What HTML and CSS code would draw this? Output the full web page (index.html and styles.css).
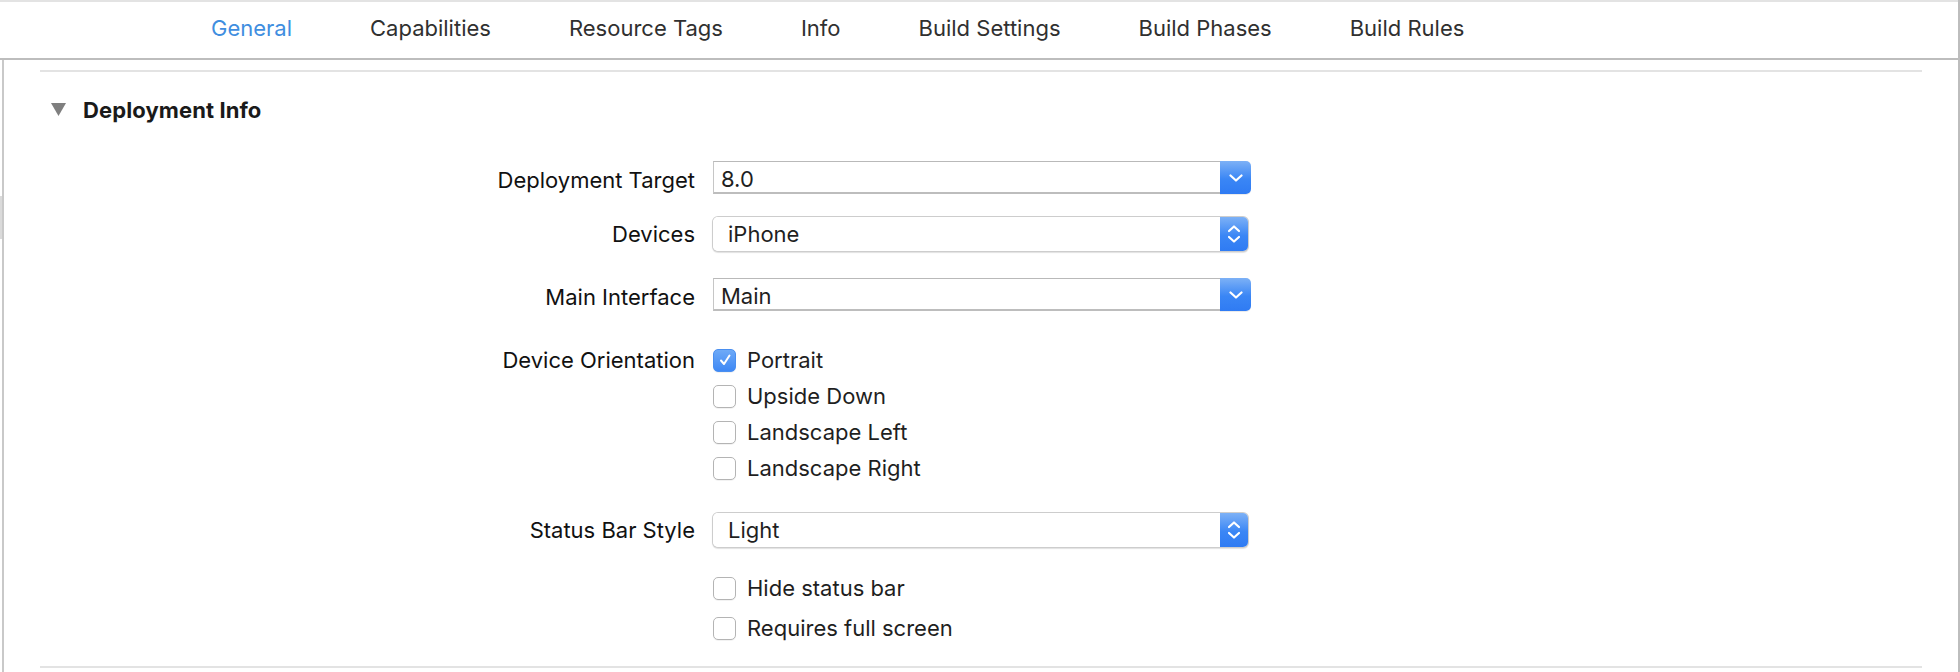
FILE: index.html
```html
<!DOCTYPE html>
<html lang="en">
<head>
<meta charset="utf-8">
<title>General</title>
<link rel="stylesheet" href="styles.css">
</head>
<body>
<div class="window">
  <nav class="tabs">
    <span class="tab active">General</span>
    <span class="tab">Capabilities</span>
    <span class="tab">Resource Tags</span>
    <span class="tab">Info</span>
    <span class="tab">Build Settings</span>
    <span class="tab">Build Phases</span>
    <span class="tab">Build Rules</span>
  </nav>
  <main class="content">
    <section class="section">
      <header class="section-head">
        <svg class="disclosure" width="15" height="13" viewBox="0 0 15 13"><polygon points="0,0 15,0 7.5,13" fill="#7f7f7f"/></svg>
        <h2 class="section-title">Deployment Info</h2>
      </header>
      <div class="form">
        <div class="row row-combo row-target">
          <div class="label">Deployment Target</div>
          <div class="combo">
            <span class="combo-field">8.0</span>
            <span class="combo-btn"><svg width="14" height="8" viewBox="0 0 14 8"><polyline points="1.5,1.5 7,6.5 12.5,1.5" fill="none" stroke="#fff" stroke-width="2.2" stroke-linecap="round" stroke-linejoin="round"/></svg></span>
          </div>
        </div>
        <div class="row row-devices">
          <div class="label">Devices</div>
          <div class="popup">
            <span class="popup-field">iPhone</span>
            <span class="popup-btn"><svg width="14" height="20" viewBox="0 0 14 20"><polyline points="2,7 7,2.5 12,7" fill="none" stroke="#fff" stroke-width="2.2" stroke-linecap="round" stroke-linejoin="round"/><polyline points="2,13 7,17.5 12,13" fill="none" stroke="#fff" stroke-width="2.2" stroke-linecap="round" stroke-linejoin="round"/></svg></span>
          </div>
        </div>
        <div class="row row-combo row-main">
          <div class="label">Main Interface</div>
          <div class="combo">
            <span class="combo-field">Main</span>
            <span class="combo-btn"><svg width="14" height="8" viewBox="0 0 14 8"><polyline points="1.5,1.5 7,6.5 12.5,1.5" fill="none" stroke="#fff" stroke-width="2.2" stroke-linecap="round" stroke-linejoin="round"/></svg></span>
          </div>
        </div>
        <div class="row row-orient">
          <div class="label">Device Orientation</div>
          <div class="checks">
            <div class="check"><span class="box checked"><svg width="14" height="14" viewBox="0 0 14 14"><polyline points="3,7.5 6,11 11.5,2.5" fill="none" stroke="#fff" stroke-width="2" stroke-linecap="round" stroke-linejoin="round"/></svg></span><span class="check-text">Portrait</span></div>
            <div class="check"><span class="box"></span><span class="check-text">Upside Down</span></div>
            <div class="check"><span class="box"></span><span class="check-text">Landscape Left</span></div>
            <div class="check"><span class="box"></span><span class="check-text">Landscape Right</span></div>
          </div>
        </div>
        <div class="row row-status">
          <div class="label">Status Bar Style</div>
          <div class="popup">
            <span class="popup-field">Light</span>
            <span class="popup-btn"><svg width="14" height="20" viewBox="0 0 14 20"><polyline points="2,7 7,2.5 12,7" fill="none" stroke="#fff" stroke-width="2.2" stroke-linecap="round" stroke-linejoin="round"/><polyline points="2,13 7,17.5 12,13" fill="none" stroke="#fff" stroke-width="2.2" stroke-linecap="round" stroke-linejoin="round"/></svg></span>
          </div>
        </div>
        <div class="row row-hide">
          <div class="label"></div>
          <div class="checks checks-wide">
            <div class="check"><span class="box"></span><span class="check-text">Hide status bar</span></div>
            <div class="check"><span class="box"></span><span class="check-text">Requires full screen</span></div>
          </div>
        </div>
      </div>
    </section>
  </main>
</div>
</body>
</html>
```

FILE: styles.css
```css
html, body {
  margin: 0;
  padding: 0;
  background: #ffffff;
}

body {
  font-family: Inter, "Liberation Sans", sans-serif;
  color: #1b1b1b;
  -webkit-font-smoothing: antialiased;
}

.window {
  height: 672px;
  box-sizing: border-box;
  border-right: 2px solid #bdbdbd;
  display: flex;
  flex-direction: column;
  overflow: hidden;
}

.tabs {
  flex: none;
  height: 60px;
  box-sizing: border-box;
  border-top: 2px solid #e3e3e3;
  border-bottom: 2px solid #bdbdbd;
  display: flex;
  align-items: center;
  gap: 78px;
  padding: 0 0 5px 211px;
  font-size: 22px;
  color: #303030;
}

.tab {
  white-space: nowrap;
  line-height: 1;
}

.tab.active {
  color: #3f8edf;
}

.content {
  flex: 1;
  margin-left: 2px;
  border-left: 2px solid #c9c9c9;
  position: relative;
}

.content::before {
  content: "";
  position: absolute;
  left: -4px;
  top: 136px;
  width: 2px;
  height: 43px;
  background: #dadada;
}

.section {
  margin: 10px 36px 0 36px;
  border-top: 2px solid #e3e3e3;
  border-bottom: 2px solid #e3e3e3;
  padding-bottom: 26px;
}

.section-head {
  display: flex;
  align-items: center;
  height: 24px;
  margin-top: 25px;
  padding-left: 11px;
  gap: 17px;
}

.disclosure {
  display: block;
  flex: none;
  margin-top: 1px;
}

.section-title {
  margin: 0;
  padding-top: 2px;
  font-size: 22px;
  font-weight: 700;
  color: #1a1a1a;
  line-height: 1;
  letter-spacing: 0.1px;
}

.form {
  margin-top: 40px;
  display: flex;
  flex-direction: column;
}

.row {
  display: grid;
  grid-template-columns: 655px 538px;
  column-gap: 18px;
  align-items: center;
}

.row-devices { margin-top: 23px; }
.row-main { margin-top: 27px; }
.row-orient { margin-top: 37px; align-items: start; }
.row-status { margin-top: 33px; }
.row-hide { margin-top: 29px; }

.label {
  text-align: right;
  font-size: 22px;
  line-height: 1;
  color: #111111;
  white-space: nowrap;
}

.row-combo .label {
  padding-top: 5px;
}

.row-orient .label {
  padding-top: 1px;
}

.combo {
  display: flex;
  height: 33px;
  font-size: 22px;
}

.combo-field {
  flex: 1;
  box-sizing: border-box;
  border: 1px solid #c6c6c6;
  border-top-color: #b9b9b9;
  border-bottom: 2px solid #bdbdbd;
  border-right: none;
  padding: 5px 0 0 7px;
  color: #1f1f1f;
  line-height: 24px;
  overflow: hidden;
}

.combo-btn {
  width: 31px;
  flex: none;
  display: flex;
  align-items: center;
  justify-content: center;
  border-radius: 0 5px 5px 0;
  background: linear-gradient(#7db1f6, #3a86f5 55%, #2f7bf3);
  box-shadow: 0 1px 0 rgba(0, 0, 0, 0.08);
}

.popup {
  display: flex;
  width: 535px;
  height: 34px;
  border-radius: 5px;
  box-shadow: 0 0 0 1px #cdcdcd, 0 1px 1px 1px rgba(0, 0, 0, 0.12);
  font-size: 22px;
  overflow: hidden;
}

.popup-field {
  flex: 1;
  padding: 0 0 0 15px;
  line-height: 34px;
  color: #1f1f1f;
  background: #ffffff;
}

.popup-btn {
  width: 28px;
  flex: none;
  display: flex;
  align-items: center;
  justify-content: center;
  background: linear-gradient(#7db1f6, #3a86f5 55%, #2f7bf3);
}

.checks {
  display: flex;
  flex-direction: column;
  gap: 12px;
}

.checks-wide {
  gap: 16px;
}

.check {
  display: flex;
  align-items: center;
  height: 24px;
  gap: 11px;
  font-size: 22px;
  color: #1f1f1f;
  white-space: nowrap;
}

.box {
  width: 23px;
  height: 23px;
  box-sizing: border-box;
  border: 1px solid #b4b4b4;
  border-radius: 5px;
  background: #ffffff;
  box-shadow: 0 1px 0 rgba(0, 0, 0, 0.05);
  display: flex;
  align-items: center;
  justify-content: center;
  flex: none;
}

.box.checked {
  border-color: #4a8ff0;
  background: linear-gradient(#6eaaf7, #3e88f5);
}

.check-text {
  line-height: 1;
}
```
